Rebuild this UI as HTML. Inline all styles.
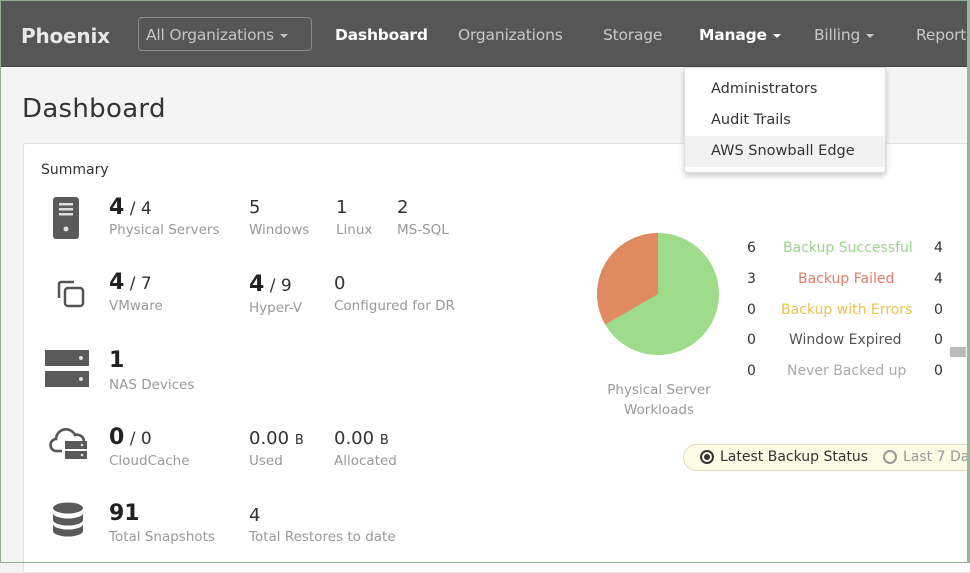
<!DOCTYPE html>
<html><head><meta charset="utf-8">
<style>
*{margin:0;padding:0;box-sizing:border-box}
body{width:970px;height:563px;overflow:hidden;background:#f4f4f4;font-family:"DejaVu Sans","Liberation Sans",sans-serif;position:relative;color:#333}
.frame{position:absolute;left:0;top:0;width:970px;height:563px;border:1px solid #8fae8f;border-right:3px solid #9bb59b;pointer-events:none;z-index:10}
.nav{position:absolute;left:0;top:0;width:970px;height:67px;background:#565656;border-bottom:1px solid #444}
.nav span{position:absolute;top:26px;font-size:15.5px;color:#c8c8c8;white-space:nowrap;letter-spacing:-0.2px}
.caret{display:inline-block;width:0;height:0;border-left:4px solid transparent;border-right:4px solid transparent;border-top:4px solid currentColor;vertical-align:middle;margin-left:6px}
.a{position:absolute;white-space:nowrap}
h1{position:absolute;left:22px;top:94px;font-size:26px;font-weight:normal;color:#333;letter-spacing:0.3px}
.card{position:absolute;left:23px;top:143px;width:960px;height:430px;background:#fff;border:1px solid #e2e2e2;border-radius:3px}
.big{font-size:22px;font-weight:bold;color:#222}
.sl{font-size:17px;color:#333;font-weight:normal}
.lb{font-size:13.5px;color:#999}
.n{font-size:18px;color:#333}
.menu{position:absolute;left:684px;top:67px;width:202px;height:106px;background:#fff;border:1px solid #ddd;border-radius:0 0 4px 4px;box-shadow:0 3px 6px rgba(0,0,0,.2);z-index:5}
.menu div{position:absolute;left:26px;font-size:14.5px;color:#333}
.st{font-size:14px}
</style></head><body>
<div class="nav">
<span style="left:21px;top:24px;font-size:20px;font-weight:bold;color:#e8e8e8">Phoenix</span>
<div class="a" style="left:138px;top:17px;width:174px;height:34px;border:1px solid #8a8a8a;border-radius:4px"></div>
<span style="left:146px;color:#c4c4c4">All Organizations<i class="caret"></i></span>
<span style="left:335px;color:#fff;font-weight:bold">Dashboard</span>
<span style="left:458px">Organizations</span>
<span style="left:603px">Storage</span>
<span style="left:699px;color:#fff;font-weight:bold">Manage<i class="caret"></i></span>
<span style="left:814px">Billing<i class="caret"></i></span>
<span style="left:916px">Reports</span>
</div>
<h1>Dashboard</h1>
<div class="card"></div>
<div class="menu">
<div style="top:13px">Administrators</div>
<div style="top:44px">Audit Trails</div>
<div style="top:68px;left:0;width:200px;height:31px;background:#f2f2f2"></div>
<div style="top:75px">AWS Snowball Edge</div>
</div>
<div class="a" style="left:41px;top:162px;font-size:14px;color:#333">Summary</div>

<svg class="a" style="left:52px;top:196px" width="30" height="44"><rect x="1" y="1" width="26" height="42" rx="3" fill="#5a5a5a"/><rect x="7" y="7" width="14" height="2.5" fill="#ddd"/><rect x="7" y="12" width="14" height="2.5" fill="#ddd"/><rect x="7" y="17" width="14" height="2.5" fill="#ddd"/><circle cx="14" cy="33" r="2.5" fill="#ddd"/></svg>
<svg class="a" style="left:55px;top:278px" width="32" height="32" fill="none" stroke="#555" stroke-width="2.5"><path d="M4 20V6a2 2 0 0 1 2-2h13"/><rect x="10" y="10" width="18" height="18" rx="3"/></svg>
<svg class="a" style="left:45px;top:350px" width="46" height="40"><rect x="0" y="0" width="44" height="16" fill="#5a5a5a"/><rect x="0" y="21" width="44" height="16" fill="#5a5a5a"/><circle cx="36" cy="8" r="2" fill="#ddd"/><circle cx="36" cy="29" r="2" fill="#ddd"/></svg>
<svg class="a" style="left:48px;top:425px" width="42" height="36"><path d="M14 26H9a6 6 0 0 1-1-12a10 10 0 0 1 19-4a7 7 0 0 1 9 6" fill="none" stroke="#555" stroke-width="2.6"/><rect x="17" y="16" width="22" height="8" fill="#5a5a5a"/><rect x="17" y="26" width="22" height="8" fill="#5a5a5a"/><circle cx="34" cy="20" r="1.3" fill="#ddd"/><circle cx="34" cy="30" r="1.3" fill="#ddd"/></svg>
<svg class="a" style="left:52px;top:502px" width="32" height="38"><ellipse cx="16" cy="6" rx="15" ry="5.5" fill="#5a5a5a"/><path d="M1 11a15 5.5 0 0 0 30 0v7a15 5.5 0 0 1-30 0z" fill="#5a5a5a"/><path d="M1 22a15 5.5 0 0 0 30 0v7a15 5.5 0 0 1-30 0z" fill="#5a5a5a"/></svg>

<div class="a" style="left:109px;top:195px"><span class="big">4</span><span class="sl"> / 4</span></div>
<div class="a lb" style="left:109px;top:222px">Physical Servers</div>
<div class="a n" style="left:249px;top:197px">5</div><div class="a lb" style="left:249px;top:222px">Windows</div>
<div class="a n" style="left:336px;top:197px">1</div><div class="a lb" style="left:336px;top:222px">Linux</div>
<div class="a n" style="left:397px;top:197px">2</div><div class="a lb" style="left:397px;top:222px">MS-SQL</div>

<div class="a" style="left:109px;top:270px"><span class="big">4</span><span class="sl"> / 7</span></div>
<div class="a lb" style="left:109px;top:298px">VMware</div>
<div class="a" style="left:249px;top:272px"><span class="big">4</span><span class="sl"> / 9</span></div>
<div class="a lb" style="left:249px;top:300px">Hyper-V</div>
<div class="a n" style="left:334px;top:273px">0</div><div class="a lb" style="left:334px;top:298px">Configured for DR</div>

<div class="a big" style="left:109px;top:348px">1</div>
<div class="a lb" style="left:109px;top:377px">NAS Devices</div>

<div class="a" style="left:109px;top:425px"><span class="big">0</span><span class="sl"> / 0</span></div>
<div class="a lb" style="left:109px;top:453px">CloudCache</div>
<div class="a n" style="left:249px;top:428px">0.00 <span style="font-size:13px">B</span></div><div class="a lb" style="left:249px;top:453px">Used</div>
<div class="a n" style="left:334px;top:428px">0.00 <span style="font-size:13px">B</span></div><div class="a lb" style="left:334px;top:453px">Allocated</div>

<div class="a big" style="left:109px;top:501px">91</div>
<div class="a lb" style="left:109px;top:529px">Total Snapshots</div>
<div class="a n" style="left:249px;top:505px">4</div><div class="a lb" style="left:249px;top:529px">Total Restores to date</div>

<svg class="a" style="left:596px;top:232px" width="124" height="124"><circle cx="62" cy="62" r="61" fill="#9edb8a"/><path d="M62 62L62 1A61 61 0 0 0 9.2 92.5Z" fill="#e08a62"/></svg>
<div class="a lb" style="left:598px;top:380px;width:122px;text-align:center;white-space:normal;line-height:20px">Physical Server Workloads</div>

<div class="a st" style="left:747px;top:240px">6</div><div class="a st" style="left:783px;top:240px;color:#9ad68a">Backup Successful</div><div class="a st" style="left:934px;top:240px">4</div>
<div class="a st" style="left:747px;top:271px">3</div><div class="a st" style="left:798px;top:271px;color:#e07c66">Backup Failed</div><div class="a st" style="left:934px;top:271px">4</div>
<div class="a st" style="left:747px;top:302px">0</div><div class="a st" style="left:781px;top:302px;color:#f0c050">Backup with Errors</div><div class="a st" style="left:934px;top:302px">0</div>
<div class="a st" style="left:747px;top:332px">0</div><div class="a st" style="left:789px;top:332px;color:#555">Window Expired</div><div class="a st" style="left:934px;top:332px">0</div>
<div class="a st" style="left:747px;top:363px">0</div><div class="a st" style="left:787px;top:363px;color:#aaa">Never Backed up</div><div class="a st" style="left:934px;top:363px">0</div>
<div class="a" style="left:950px;top:347px;width:16px;height:10px;background:#bbb"></div>

<div class="a" style="left:683px;top:444px;width:300px;height:27px;background:#fdfbe6;border:1px solid #e0dcc0;border-radius:14px"></div>
<div class="a" style="left:700px;top:450px;width:14px;height:14px;border:2px solid #333;border-radius:50%"><div style="margin:2px;width:6px;height:6px;background:#333;border-radius:50%"></div></div>
<div class="a st" style="left:720px;top:449px;color:#333">Latest Backup Status</div>
<div class="a" style="left:883px;top:450px;width:14px;height:14px;border:2px solid #999;border-radius:50%"></div>
<div class="a st" style="left:903px;top:449px;color:#999">Last 7 Days</div>
<div class="frame"></div>
</body></html>
